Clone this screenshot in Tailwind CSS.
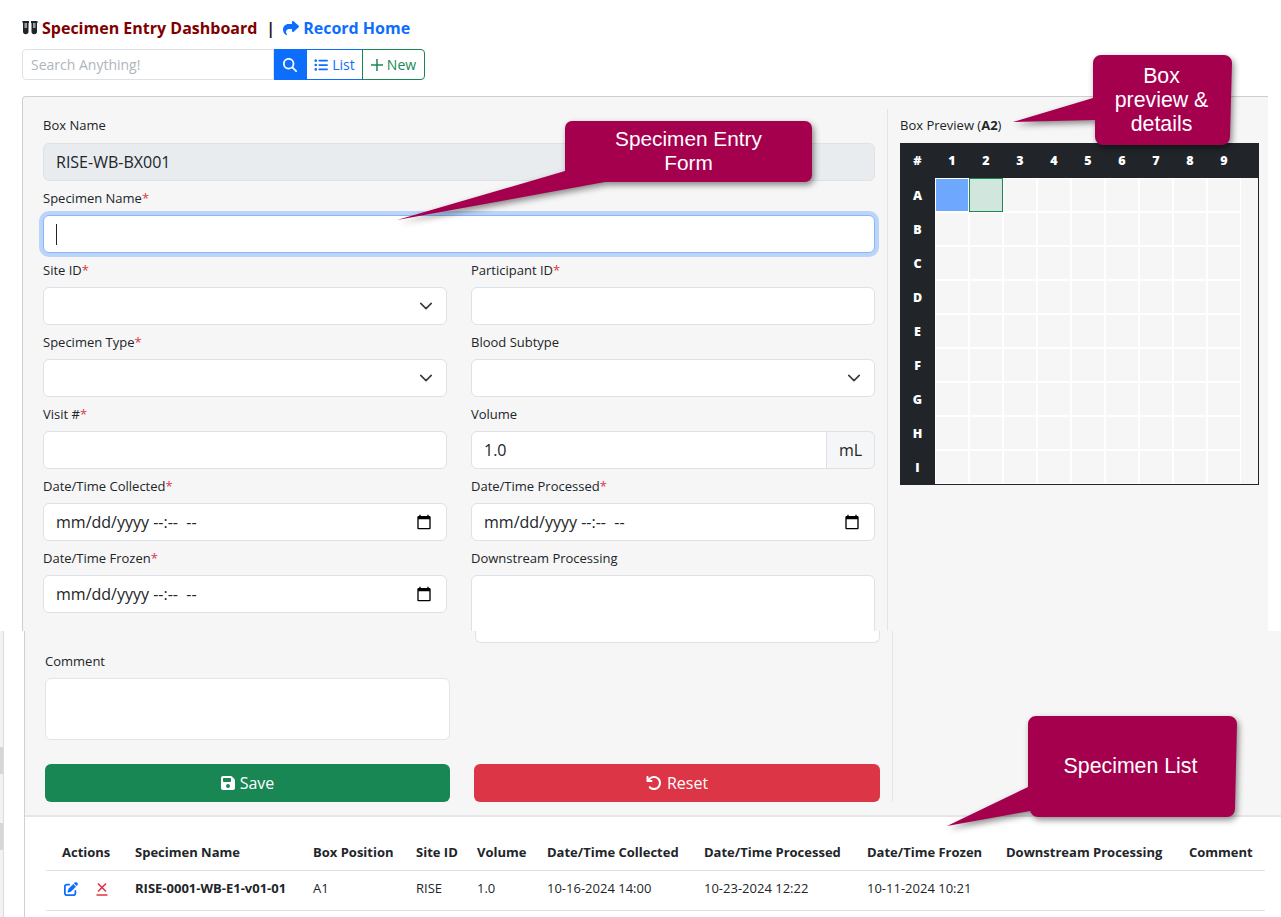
<!DOCTYPE html>
<html lang="en">
<head>
  <meta charset="UTF-8" />
  <title>Specimen Entry Dashboard</title>
  <script src="https://cdn.jsdelivr.net/npm/@tailwindcss/browser@4"></script>
</head>
<body class="relative w-[1281px] h-[917px] overflow-hidden bg-white text-[#212529] font-['Open_Sans',sans-serif]">

  <!-- top capture -->
  <section class="h-[631px] overflow-hidden">
    <div class="pl-[22px] pt-[17px] h-[49px]">
      <h1 class="flex items-center h-[22px] text-[16px] font-bold whitespace-nowrap">
        <svg class="w-[16px] h-[16px] mr-[4px]" viewBox="0 0 16 16"><path fill="#212529" d="M0.500 1h6.500v2h-0.500v8.500a2.750 2.750 0 0 1-5.500 0V3H0.500zM9 1h6.500v2H15v8.500a2.750 2.750 0 0 1-5.500 0V3H9z"/><path fill="#9a9da1" d="M2.500 3h2.500v5H2.500zM11 3h2.500v5H11z"/></svg>
        <span class="text-[#800000]">Specimen Entry Dashboard</span>
        <span class="ml-[9px] mr-[8px] text-[#2b1a2a]">|</span>
        <svg class="w-[16px] h-[16px] mr-[4px]" viewBox="0 0 512 512"><path fill="#0d6efd" d="M307 34.800c-11.500 5.100-19 16.600-19 29.200v64H176C78.800 128 0 206.800 0 304C0 417.300 81.500 467.900 100.200 478.100c2.500 1.400 5.300 1.900 8.100 1.900c10.900 0 19.700-8.900 19.700-19.700c0-7.500-4.300-14.400-9.800-19.500C108.800 431.900 96 414.400 96 384c0-53 43-96 96-96h96v64c0 12.600 7.400 24.100 19 29.200s25 3 34.400-5.400l160-144c6.700-6.100 10.600-14.700 10.600-23.800s-3.800-17.700-10.600-23.800l-160-144c-9.400-8.500-22.900-10.600-34.400-5.400z"/></svg>
        <span class="text-[#0d6efd]">Record Home</span>
      </h1>
    </div>

    <div class="flex ml-[22px] h-[31px] text-[14px]">
      <input type="text" placeholder="Search Anything!" class="w-[252px] px-[8px] border border-[#dee2e6] rounded-l-[4px] bg-white outline-none placeholder:text-[#adb5bd]">
      <div class="flex items-center justify-center w-[32px] bg-[#0d6efd]">
        <svg class="w-[14px] h-[14px]" viewBox="0 0 512 512"><path fill="#fff" d="M416 208c0 45.900-14.900 88.300-40 122.700L502.600 457.400c12.500 12.500 12.500 32.800 0 45.300s-32.800 12.500-45.300 0L330.700 376c-34.400 25.200-76.800 40-122.700 40C93.100 416 0 322.900 0 208S93.100 0 208 0S416 93.100 416 208zM208 352a144 144 0 1 0 0-288 144 144 0 1 0 0 288z"/></svg>
      </div>
      <div class="flex items-center justify-center gap-[4px] w-[57px] border border-[#0d6efd] text-[#0d6efd]">
        <svg class="w-[14px] h-[14px]" viewBox="0 0 512 512"><path fill="#0d6efd" d="M64 144a48 48 0 1 0 0-96 48 48 0 1 0 0 96zM192 64c-17.700 0-32 14.300-32 32s14.300 32 32 32H480c17.700 0 32-14.300 32-32s-14.300-32-32-32H192zm0 160c-17.700 0-32 14.300-32 32s14.300 32 32 32H480c17.700 0 32-14.300 32-32s-14.300-32-32-32H192zm0 160c-17.700 0-32 14.300-32 32s14.300 32 32 32H480c17.700 0 32-14.300 32-32s-14.300-32-32-32H192zM64 464a48 48 0 1 0 0-96 48 48 0 1 0 0 96zm48-208a48 48 0 1 0 -96 0 48 48 0 1 0 96 0z"/></svg>
        List
      </div>
      <div class="flex items-center justify-center gap-[4px] w-[63px] -ml-px border border-[#198754] rounded-r-[4px] text-[#198754]">
        <svg class="w-[12px] h-[12px]" viewBox="0 0 12 12"><path stroke="#198754" stroke-width="1.500" d="M6 0v12M0 6h12"/></svg>
        New
      </div>
    </div>

    <div class="flex ml-[22px] mt-[16px] w-[1246px] h-[535px] border-t border-l border-[#cfcfcf] rounded-tl-[4px] bg-[#f6f6f6]">
      <div class="w-[864px] pl-[20px] pt-[19px] text-[13px]">
        <label class="block h-[18px] leading-[18px] mb-[9px]">Box Name</label>
        <div class="flex items-center h-[38px] w-[832px] px-[12px] mb-[8px] border border-[#dee2e6] rounded-[6px] bg-[#e9ecef] text-[16px]">RISE-WB-BX001</div>

        <label class="block h-[18px] leading-[18px] mb-[8px]">Specimen Name<span class="text-[#dc3545]">*</span></label>
        <div class="relative w-[832px] h-[38px] mb-[8px]">
          <input type="text" class="block w-full h-full px-[12px] border border-[#86b7fe] rounded-[6px] bg-white caret-transparent outline-none shadow-[0_0_0_4px_rgba(13,110,253,0.25)]">
          <span class="absolute left-[13px] top-[9px] w-px h-[21px] bg-[#212529]"></span>
        </div>

        <div class="grid grid-cols-[404px_404px] gap-x-[24px]">
          <div class="h-[72px]">
            <label class="block h-[18px] leading-[18px] mb-[8px]">Site ID<span class="text-[#dc3545]">*</span></label>
            <div class="relative h-[38px]">
              <select class="block w-full h-full appearance-none border border-[#dee2e6] rounded-[6px] bg-white"></select>
              <svg class="absolute right-[14px] top-[12px] w-[14px] h-[14px]" viewBox="0 0 16 16"><path fill="none" stroke="#343a40" stroke-width="1.800" stroke-linecap="round" stroke-linejoin="round" d="m2 5 6 6 6-6"/></svg>
            </div>
          </div>
          <div class="h-[72px]">
            <label class="block h-[18px] leading-[18px] mb-[8px]">Participant ID<span class="text-[#dc3545]">*</span></label>
            <input type="text" class="block w-full h-[38px] border border-[#dee2e6] rounded-[6px] bg-white">
          </div>

          <div class="h-[72px]">
            <label class="block h-[18px] leading-[18px] mb-[8px]">Specimen Type<span class="text-[#dc3545]">*</span></label>
            <div class="relative h-[38px]">
              <select class="block w-full h-full appearance-none border border-[#dee2e6] rounded-[6px] bg-white"></select>
              <svg class="absolute right-[14px] top-[12px] w-[14px] h-[14px]" viewBox="0 0 16 16"><path fill="none" stroke="#343a40" stroke-width="1.800" stroke-linecap="round" stroke-linejoin="round" d="m2 5 6 6 6-6"/></svg>
            </div>
          </div>
          <div class="h-[72px]">
            <label class="block h-[18px] leading-[18px] mb-[8px]">Blood Subtype</label>
            <div class="relative h-[38px]">
              <select class="block w-full h-full appearance-none border border-[#dee2e6] rounded-[6px] bg-white"></select>
              <svg class="absolute right-[14px] top-[12px] w-[14px] h-[14px]" viewBox="0 0 16 16"><path fill="none" stroke="#343a40" stroke-width="1.800" stroke-linecap="round" stroke-linejoin="round" d="m2 5 6 6 6-6"/></svg>
            </div>
          </div>

          <div class="h-[72px]">
            <label class="block h-[18px] leading-[18px] mb-[8px]">Visit #<span class="text-[#dc3545]">*</span></label>
            <input type="text" class="block w-full h-[38px] border border-[#dee2e6] rounded-[6px] bg-white">
          </div>
          <div class="h-[72px]">
            <label class="block h-[18px] leading-[18px] mb-[8px]">Volume</label>
            <div class="flex h-[38px] text-[16px]">
              <input type="text" value="1.0" class="flex-1 min-w-0 px-[12px] border border-[#dee2e6] rounded-l-[6px] bg-white">
              <span class="flex items-center justify-center w-[49px] -ml-px border border-[#dee2e6] rounded-r-[6px] bg-[#f5f6f7]">mL</span>
            </div>
          </div>

          <div class="h-[72px]">
            <label class="block h-[18px] leading-[18px] mb-[8px]">Date/Time Collected<span class="text-[#dc3545]">*</span></label>
            <div class="flex items-center justify-between h-[38px] pl-[12px] pr-[14px] border border-[#dee2e6] rounded-[6px] bg-white text-[16px]">
              <span class="whitespace-pre">mm/dd/yyyy --:--  --</span>
              <svg class="w-[16px] h-[16px]" viewBox="0 0 24 24"><path fill="#000" d="M20 3h-1V1h-2v2H7V1H5v2H4c-1.100 0-2 .9-2 2v16c0 1.100.9 2 2 2h16c1.100 0 2-.9 2-2V5c0-1.100-.9-2-2-2zm0 18H4V8h16v13z"/></svg>
            </div>
          </div>
          <div class="h-[72px]">
            <label class="block h-[18px] leading-[18px] mb-[8px]">Date/Time Processed<span class="text-[#dc3545]">*</span></label>
            <div class="flex items-center justify-between h-[38px] pl-[12px] pr-[14px] border border-[#dee2e6] rounded-[6px] bg-white text-[16px]">
              <span class="whitespace-pre">mm/dd/yyyy --:--  --</span>
              <svg class="w-[16px] h-[16px]" viewBox="0 0 24 24"><path fill="#000" d="M20 3h-1V1h-2v2H7V1H5v2H4c-1.100 0-2 .9-2 2v16c0 1.100.9 2 2 2h16c1.100 0 2-.9 2-2V5c0-1.100-.9-2-2-2zm0 18H4V8h16v13z"/></svg>
            </div>
          </div>

          <div class="h-[72px]">
            <label class="block h-[18px] leading-[18px] mb-[8px]">Date/Time Frozen<span class="text-[#dc3545]">*</span></label>
            <div class="flex items-center justify-between h-[38px] pl-[12px] pr-[14px] border border-[#dee2e6] rounded-[6px] bg-white text-[16px]">
              <span class="whitespace-pre">mm/dd/yyyy --:--  --</span>
              <svg class="w-[16px] h-[16px]" viewBox="0 0 24 24"><path fill="#000" d="M20 3h-1V1h-2v2H7V1H5v2H4c-1.100 0-2 .9-2 2v16c0 1.100.9 2 2 2h16c1.100 0 2-.9 2-2V5c0-1.100-.9-2-2-2zm0 18H4V8h16v13z"/></svg>
            </div>
          </div>
          <div class="h-[72px]">
            <label class="block h-[18px] leading-[18px] mb-[8px]">Downstream Processing</label>
            <div class="h-[90px] border border-[#dee2e6] rounded-[6px] bg-white"></div>
          </div>
        </div>
      </div>

      <div class="mt-[12px] pl-[12px] pt-[7px] border-l border-[#e3e5e8]">
        <p class="h-[18px] leading-[18px] mb-[9px] text-[13px] whitespace-nowrap">Box Preview (<b>A2</b>)</p>
        <div id="boxGrid" class="w-[359px] border-r border-b border-[#212529] text-[12.500px] font-extrabold"></div>
      </div>
    </div>
  </section>

  <!-- bottom capture -->
  <section class="flex h-[286px]">
    <div class="w-[4px] mr-[20px] border-r border-[#dcdcdc] bg-[#f2f2f2]">
      <div class="mt-[116px] h-[27px] bg-[#d6d6d6]"></div>
      <div class="mt-[49px] h-[27px] bg-[#d6d6d6]"></div>
    </div>
    <div class="flex-1 border-l border-[#d0d0d0]">
      <div class="flex h-[186px] border-b-2 border-[#e6e6e6] bg-[#f6f6f6]">
        <div class="w-[868px] h-[171px] pl-[20px] border-r border-[#e3e5e8] text-[13px]">
          <div class="w-[405px] h-[12px] ml-[430px] border-x border-b border-[#dee2e6] rounded-b-[6px] bg-white"></div>
          <label class="block h-[18px] leading-[18px] mt-[9px] mb-[8px]">Comment</label>
          <div class="w-[405px] h-[62px] mb-[24px] border border-[#e3e5e8] rounded-[6px] bg-white"></div>
          <div class="flex gap-[24px] text-[16px] text-white">
            <div class="flex items-center justify-center gap-[5px] w-[405px] h-[38px] rounded-[6px] bg-[#198754]">
              <svg class="w-[14px] h-[16px]" viewBox="0 0 448 512"><path fill="#fff" d="M64 32C28.700 32 0 60.700 0 96V416c0 35.300 28.700 64 64 64H384c35.300 0 64-28.700 64-64V173.300c0-17-6.700-33.300-18.700-45.300L352 50.700C340 38.700 323.700 32 306.700 32H64zm0 96c0-17.700 14.300-32 32-32H288c17.700 0 32 14.300 32 32v64c0 17.700-14.300 32-32 32H96c-17.700 0-32-14.300-32-32V128zM224 288a64 64 0 1 1 0 128 64 64 0 1 1 0-128z"/></svg>
              Save
            </div>
            <div class="flex items-center justify-center gap-[5px] w-[406px] h-[38px] rounded-[6px] bg-[#dc3545]">
              <svg class="w-[16px] h-[16px]" viewBox="0 0 512 512"><path fill="#fff" d="M125.700 160H176c17.700 0 32 14.300 32 32s-14.300 32-32 32H48c-17.700 0-32-14.300-32-32V64c0-17.700 14.300-32 32-32s32 14.300 32 32v51.200L97.600 97.600c87.500-87.500 229.300-87.500 316.800 0s87.500 229.300 0 316.800s-229.300 87.500-316.800 0c-12.500-12.500-12.500-32.800 0-45.300s32.800-12.500 45.300 0c62.500 62.500 163.800 62.500 226.300 0s62.500-163.800 0-226.300s-163.800-62.500-226.300 0L125.700 160z"/></svg>
              Reset
            </div>
          </div>
        </div>
      </div>

      <table class="table-fixed ml-[21px] mt-[22px] w-[1219px] text-[13px] text-left">
        <thead>
          <tr class="h-[31px] border-b border-[#dee2e6]">
            <th class="w-[73px] pl-[16px] pb-[3px] font-bold">Actions</th>
            <th class="w-[178px] pl-[16px] pb-[3px] font-bold">Specimen Name</th>
            <th class="w-[103px] pl-[16px] pb-[3px] font-bold">Box Position</th>
            <th class="w-[61px] pl-[16px] pb-[3px] font-bold">Site ID</th>
            <th class="w-[70px] pl-[16px] pb-[3px] font-bold">Volume</th>
            <th class="w-[157px] pl-[16px] pb-[3px] font-bold">Date/Time Collected</th>
            <th class="w-[163px] pl-[16px] pb-[3px] font-bold">Date/Time Processed</th>
            <th class="w-[139px] pl-[16px] pb-[3px] font-bold">Date/Time Frozen</th>
            <th class="w-[183px] pl-[16px] pb-[3px] font-bold">Downstream Processing</th>
            <th class="w-[92px] pl-[16px] pb-[3px] font-bold">Comment</th>
          </tr>
        </thead>
        <tbody>
          <tr class="h-[40px] border-b border-[#dee2e6]">
            <td class="pl-[18px] pb-[2px]">
              <div class="flex items-center gap-[18px]">
                <svg class="w-[14px] h-[14px]" viewBox="0 0 512 512"><path fill="#0d6efd" d="M471.600 21.700c-21.900-21.900-57.300-21.900-79.200 0L362.300 51.700l97.900 97.900 30.100-30.100c21.900-21.900 21.900-57.300 0-79.200L471.600 21.700zm-299.200 220c-6.100 6.100-10.800 13.600-13.500 21.900l-29.600 88.800c-2.900 8.600-.6 18.100 5.800 24.600s15.900 8.700 24.600 5.800l88.800-29.600c8.200-2.700 15.700-7.400 21.900-13.500L437.700 172.300 339.700 74.300 172.400 241.700zM96 64C43 64 0 107 0 160V416c0 53 43 96 96 96H352c53 0 96-43 96-96V320c0-17.700-14.300-32-32-32s-32 14.300-32 32v96c0 17.700-14.300 32-32 32H96c-17.700 0-32-14.300-32-32V160c0-17.700 14.300-32 32-32h96c17.700 0 32-14.300 32-32s-14.300-32-32-32H96z"/></svg>
                <svg class="w-[12px] h-[14px]" viewBox="0 0 12 14"><path fill="none" stroke="#dc3545" stroke-width="1.600" d="M2 1.500l8 8M10 1.500l-8 8M0.500 13h11"/></svg>
              </div>
            </td>
            <td class="pl-[16px] pb-[2px] font-bold">RISE-0001-WB-E1-v01-01</td>
            <td class="pl-[16px] pb-[2px]">A1</td>
            <td class="pl-[16px] pb-[2px]">RISE</td>
            <td class="pl-[16px] pb-[2px]">1.0</td>
            <td class="pl-[16px] pb-[2px]">10-16-2024 14:00</td>
            <td class="pl-[16px] pb-[2px]">10-23-2024 12:22</td>
            <td class="pl-[16px] pb-[2px]">10-11-2024 10:21</td>
            <td></td>
            <td></td>
          </tr>
        </tbody>
      </table>
    </div>
  </section>

  <!-- annotation callouts -->
  <div class="absolute left-[390px] top-[115px] w-[430px] h-[115px]">
    <svg class="absolute inset-0 w-full h-full overflow-visible drop-shadow-[2px_3px_3px_rgba(0,0,0,0.45)]" viewBox="0 0 430 115">
      <path fill="#a5004e" d="M182 6H415a7 7 0 0 1 7 7V60a7 7 0 0 1-7 7H215L7 105 175 56V13a7 7 0 0 1 7-7z"/>
    </svg>
    <p class="absolute left-[175px] top-[12px] w-[247px] text-center text-white text-[20.800px] leading-[24px] font-['Liberation_Sans',sans-serif]">Specimen Entry<br>Form</p>
  </div>

  <div class="absolute left-[1005px] top-[50px] w-[235px] h-[100px]">
    <svg class="absolute inset-0 w-full h-full overflow-visible drop-shadow-[2px_3px_3px_rgba(0,0,0,0.45)]" viewBox="0 0 235 100">
      <path fill="#a5004e" d="M96 5H219a8 8 0 0 1 8 8L225 87a8 8 0 0 1-8 8H98a8 8 0 0 1-8-8V70L8 72 88 48V13a8 8 0 0 1 8-8z"/>
    </svg>
    <p class="absolute left-[88px] top-[14px] w-[137px] text-center text-white text-[21.300px] leading-[24px] font-['Liberation_Sans',sans-serif]">Box<br>preview &amp;<br>details</p>
  </div>

  <div class="absolute left-[940px] top-[710px] w-[305px] h-[122px]">
    <svg class="absolute inset-0 w-full h-full overflow-visible drop-shadow-[2px_3px_3px_rgba(0,0,0,0.45)]" viewBox="0 0 305 122">
      <path fill="#a5004e" d="M96 6H289a8 8 0 0 1 8 8L295 99a8 8 0 0 1-8 8H98a8 8 0 0 1-8-6.500V101L7 116 88 77 88 14a8 8 0 0 1 8-8z"/>
    </svg>
    <p class="absolute left-[86px] top-[44px] w-[209px] text-center text-white text-[21.300px] leading-[24px] font-['Liberation_Sans',sans-serif]">Specimen List</p>
  </div>

  <script>
    const boxGrid = document.getElementById('boxGrid');
    const headerCell = 'flex items-center justify-center w-[34px] pt-[2px]';
    const labelCell = 'flex items-center justify-center w-[35px] h-full pt-[2px] bg-[#212529] text-white';

    let html = `<div class="flex h-[35px] bg-[#212529] text-white"><div class="flex items-center justify-center w-[35px] pt-[2px]">#</div>`;
    for (let c = 1; c <= 9; c++) html += `<div class="${headerCell}">${c}</div>`;
    html += `</div>`;

    'ABCDEFGHI'.split('').forEach((row, r) => {
      html += `<div class="flex h-[34px]"><div class="${labelCell}">${row}</div>`;
      for (let c = 1; c <= 9; c++) {
        let cell = 'w-[34px] h-[34px] border border-white bg-[#f6f6f6]';
        if (r === 0 && c === 1) cell = 'w-[34px] h-[34px] border border-white bg-[#6ea8fe]';
        if (r === 0 && c === 2) cell = 'w-[34px] h-[34px] border border-[#198754] bg-[#d1e7dd]';
        html += `<div class="${cell}"></div>`;
      }
      html += `</div>`;
    });
    boxGrid.innerHTML = html;
  </script>
</body>
</html>
